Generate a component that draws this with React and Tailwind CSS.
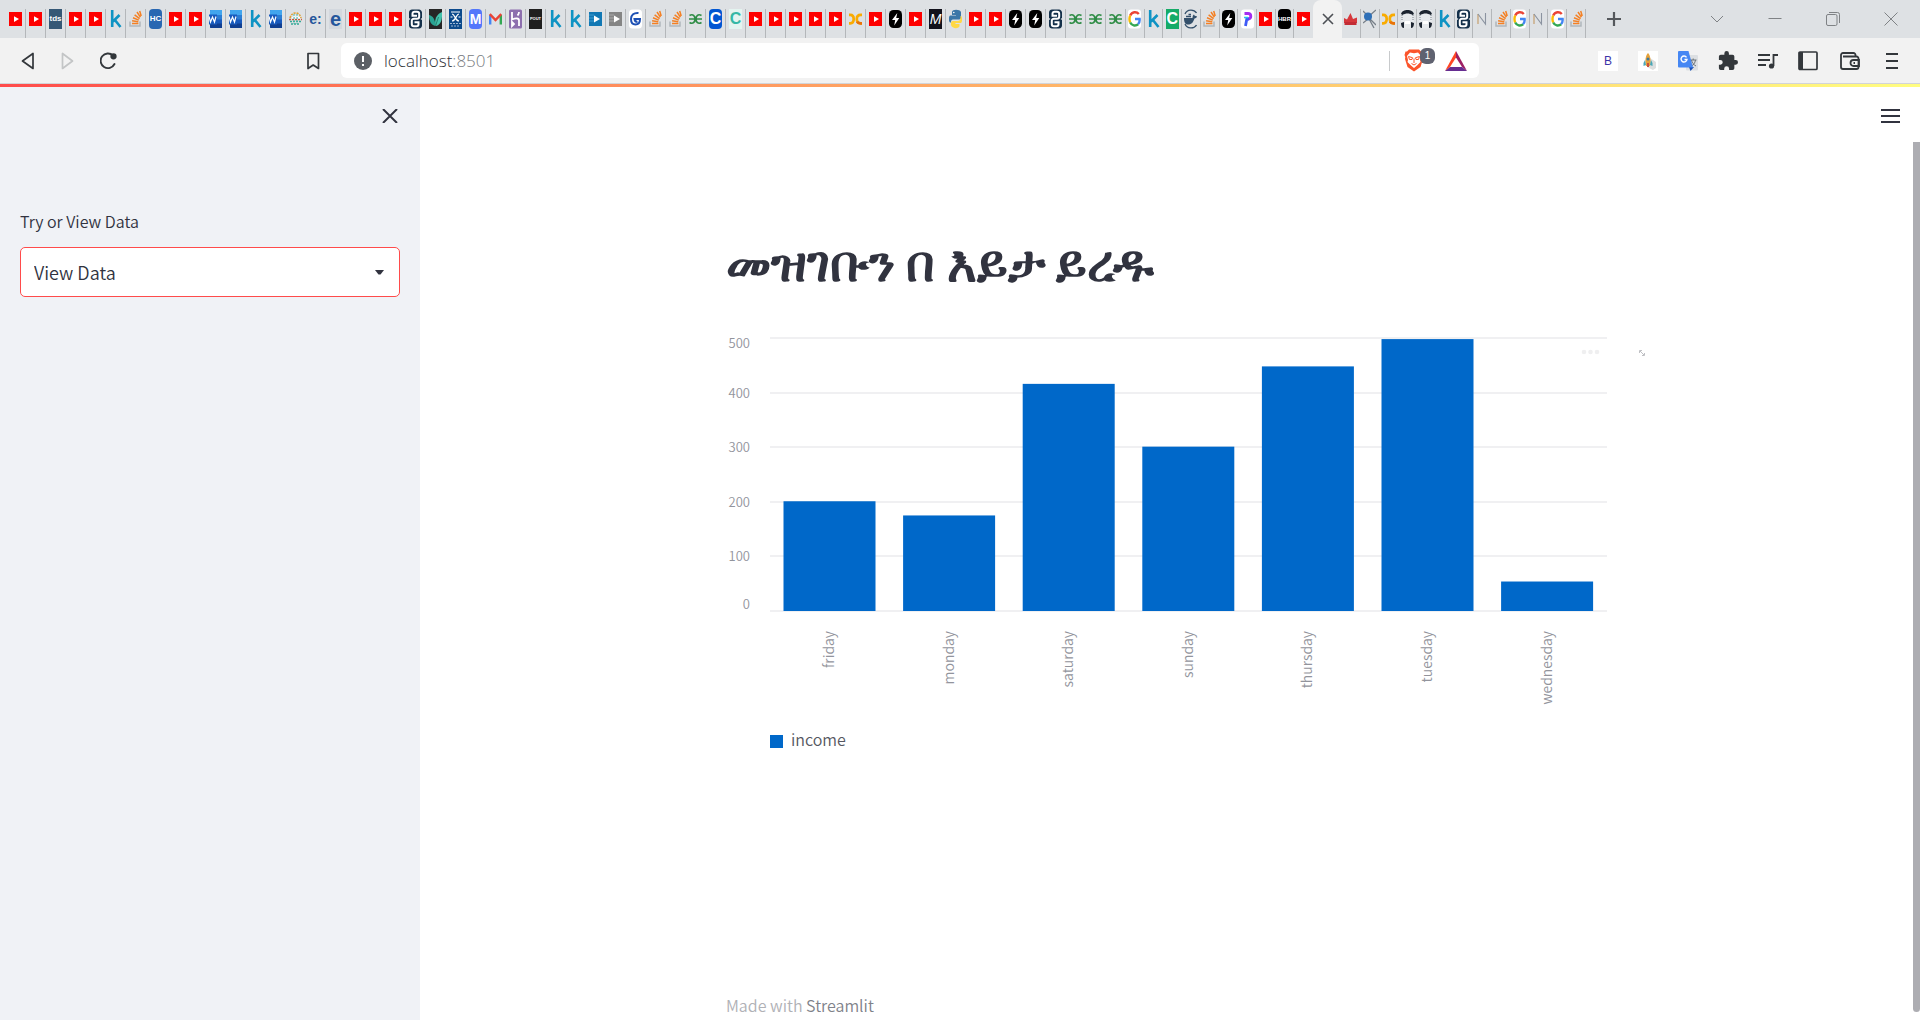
import React from "react";

const SO = () => (
  <svg viewBox="0 0 13 20" className="h-5 w-[13px]" fill="none">
    <path d="M1 12.500v4.500h10v-4.500" stroke="#b0b6bc" strokeWidth="1.500" />
    <path d="M3 14.600h6.400M3.100 11.800l6.200 1M4 8.800l5.800 2.300M5.600 5.800l5 3.800M8 3l3.400 5.200M10.700 2l1.500 5" stroke="#f48024" strokeWidth="1.500" />
  </svg>
);
const YT = () => (
  <svg viewBox="0 0 13 20" className="h-5 w-[13px]">
    <rect y="3" width="13" height="14" fill="#fe0000" />
    <path d="M5 7.200v5.800l5-2.900z" fill="#fff" />
  </svg>
);
const Word = () => (
  <svg viewBox="0 0 13 20" className="h-5 w-[13px]">
    <rect x="1" y="1" width="12" height="18" rx="1" fill="#185abd" />
    <path d="M1 2a1 1 0 0 1 1-1h11v5H1z" fill="#41a5ee" />
    <path d="M1 6h12v4.500H1z" fill="#2b7cd3" />
    <path d="M1 14.500h12V19H2a1 1 0 0 1-1-1z" fill="#103f91" />
    <rect y="5.500" width="8" height="10" fill="#185abd" />
    <path d="M0 7.500l1.500 5.500L3.500 8l2 5L7 7.500" stroke="#fff" strokeWidth="1.200" fill="none" />
  </svg>
);
const Kaggle = () => (
  <svg viewBox="0 0 13 20" className="h-5 w-[13px]" fill="none" stroke="#0e93c4" strokeWidth="2.600">
    <path d="M3.200 1v17M10.500 6L4 12.500M5.500 10.500l6 7.500" />
  </svg>
);
const Gfg = () => (
  <svg viewBox="0 0 13 20" className="h-5 w-[13px]" fill="none" stroke="#2f8d46" strokeWidth="1.700">
    <path d="M0 10h13M0.500 6.500C4 4.500 6 7 6 10s-2 5.500-5.500 3.500M12.500 6.500C9 4.500 7 7 7 10s2 5.500 5.500 3.500" />
  </svg>
);
const Scroll = () => (
  <svg viewBox="0 0 13 20" className="h-5 w-[13px]" fill="none">
    <path d="M3 .5h7c1.500 0 3 1.500 3 3v5.500l-1.500 1 1.500 1v5.500c0 1.500-1 3-3 3H3c-1.500 0-3-1-3-3V11l1.500-1L0 9V3.500c0-2 1.500-3 3-3z" fill="#14304a" />
    <path d="M2.500 6.800h5.500M3.500 6V4.800c0-1.300.8-2 2-2h2.500c1.500 0 2.200.7 2.200 2v2.700c0 1.500-.7 2.300-2.200 2.300H5c-1.500 0-2.200.8-2.200 2.200v3.200c0 1.300.7 2 2 2h2.700c1.300 0 2-.7 2-2v-1M10.500 13.200H5.500" stroke="#fff" strokeWidth="2" />
  </svg>
);
const Bolt = () => (
  <svg viewBox="0 0 13 20" className="h-5 w-[13px]">
    <rect y="1" width="13" height="18" rx="4.500" fill="#000" />
    <path d="M8.300 4L3 11h3.200l-1 5.500L10.300 9H7.200z" fill="#fff" />
  </svg>
);
const Colab = () => (
  <svg viewBox="0 0 13 20" className="h-5 w-[13px]" fill="none" strokeWidth="2.700">
    <path d="M0 5.800h1.200c2.200 0 3.500 1.500 3.500 4.200s-1.300 4.300-3.500 4.300H0" stroke="#f9ab00" />
    <path d="M13 5.800h-1.300c-2.500 0-3.900 1.700-3.900 4.200s1.400 4.300 3.900 4.300H13" stroke="#f9ab00" />
    <path d="M13 14.300h-1.500c-1.500 0-2.800-.6-3.500-1.700" stroke="#e8710a" />
  </svg>
);
const Google = () => (
  <svg viewBox="0 0 13 20" className="h-5 w-[13px]" fill="none" strokeWidth="2.400">
    <rect y="0.500" width="13" height="19" rx="3" fill="#fff" />
    <path d="M2.200 6.500C4 2.500 8.500 2.300 10.800 5" stroke="#ea4335" />
    <path d="M2.200 6.500c-.9 2.200-.9 4.800 0 7" stroke="#fbbc05" />
    <path d="M2.200 13.500c1.500 3 5.200 4 8 1.800" stroke="#34a853" />
    <path d="M7 10h4.600c.2 2-.3 4-1.600 5.200" stroke="#4285f4" />
  </svg>
);
const Letter = ({ children, className }) => (
  <span className={"flex h-5 w-[13px] items-center justify-center whitespace-nowrap font-['Liberation_Sans',sans-serif] leading-none " + className}>{children}</span>
);
const Hc = () => <Letter className="rounded bg-[#2867b2] text-[8px] font-bold text-white">HC</Letter>;
const Tds = () => <Letter className="bg-[#355876] text-[8px] font-bold text-white">tds</Letter>;
const Basket = () => (
  <svg viewBox="0 0 13 20" className="h-5 w-[13px]" fill="none" strokeWidth="1.600" strokeDasharray="2 1">
    <path d="M1 9c1-3.500 3-5 5.500-5s4.500 1.500 5.500 5" stroke="#e0a030" />
    <path d="M0 10.500h13" stroke="#c55a3a" />
    <path d="M1 12.500h11M2 15h9" stroke="#35a795" />
    <path d="M4.500 7h5M3 8.700h8" stroke="#fff" />
    <path d="M5 5v10M8 5v10" stroke="#48b7a8" strokeWidth="1" />
  </svg>
);
const Ecolon = () => <Letter className="text-[14px] font-bold text-[#24569c]">e:</Letter>;
const E = () => <Letter className="bg-[#d3d8de] text-[20px] font-bold text-[#24569c]">e</Letter>;
const Leaf = () => (
  <svg viewBox="0 0 13 20" className="h-5 w-[13px]">
    <rect width="13" height="20" fill="#262626" />
    <path d="M6.500 17C2 16 0 12 0 6c4 1 6 4 6.500 11z" fill="#2aa393" />
    <path d="M6.500 17C5 10 8 5 13 3c.5 7-1 13-6.500 14z" fill="#43c2ac" />
    <path d="M6.500 17L9.500 8" stroke="#26806f" />
  </svg>
);
const Emblem = () => (
  <svg viewBox="0 0 13 20" className="h-5 w-[13px]" fill="none" stroke="#fff">
    <rect width="13" height="20" fill="#0b4a8c" stroke="none" />
    <path d="M2 3h9M3 5c3 0 3 7 7 7M10 5c-3 0-3 7-7 7M1.500 8h2M9.500 8h2" strokeWidth="1.200" />
    <path d="M1 14.500h11M2 17h9" strokeWidth="1" strokeDasharray="2 1" stroke="#9db7d4" />
  </svg>
);
const MBlue = () => <Letter className="rounded bg-[#5377fb] text-[14px] font-bold text-white">M</Letter>;
const Gmail = () => (
  <svg viewBox="0 0 13 20" className="h-5 w-[13px]" fill="none" strokeWidth="2.400">
    <path d="M1.200 6v9.500" stroke="#4285f4" />
    <path d="M11.800 6v9.500" stroke="#34a853" />
    <path d="M0.800 5l5.700 6 5.700-6" stroke="#ea4335" />
  </svg>
);
const Heroku = () => (
  <svg viewBox="0 0 13 20" className="h-5 w-[13px]" fill="none" stroke="#fff" strokeWidth="1.800">
    <rect y="0.500" width="13" height="19" rx="1.500" fill="#8d6fae" stroke="none" />
    <path d="M3 3v7.500c4-1.500 7-1.500 7 1V17M3 13v4l2-2zM10 3c0 1.500-.5 2.500-1.500 3.500" />
  </svg>
);
const Pout = () => <Letter className="bg-[#1f1f1f] text-[4px] font-bold text-white">POUT</Letter>;
const PlayBlue = () => (
  <svg viewBox="0 0 13 20" className="h-5 w-[13px]">
    <rect y="3" width="13" height="14" fill="#1278b4" />
    <path d="M0 6h5M0 9h5M0 12h5" stroke="#3c9bce" />
    <path d="M5 6.500v7l6-3.500z" fill="#fff" />
  </svg>
);
const PlayGray = () => (
  <svg viewBox="0 0 13 20" className="h-5 w-[13px]">
    <rect y="3" width="13" height="14" fill="#858585" />
    <path d="M0 6h5M0 9h5M0 12h5" stroke="#a8a8a8" />
    <path d="M5 6.500v7l6-3.500z" fill="#fff" />
  </svg>
);
const GBlue = () => (
  <svg viewBox="0 0 13 20" className="h-5 w-[13px]" fill="none" stroke="#1d50b4" strokeWidth="2">
    <rect y="0.500" width="13" height="19" rx="3.500" fill="#fff" stroke="none" />
    <path d="M9.500 4C5 3.500 2 6 2 10c0 3.500 2 5.500 4.500 5.500S11 13.500 11 10H5.500c.3 2 1.500 3 3 3" />
  </svg>
);
const CBlue = () => <Letter className="rounded bg-[#0056d2] text-[16px] font-bold text-white">C</Letter>;
const CTeal = () => <Letter className="bg-[#e4f4f0] text-[16px] font-bold text-[#35b8a5]">C</Letter>;
const CGreen = () => <Letter className="bg-[#16ab68] text-[16px] font-bold text-white">C</Letter>;
const MBlack = () => <Letter className="bg-[#12121c] text-[14px] italic text-white">M</Letter>;
const Python = () => (
  <svg viewBox="0 0 13 20" className="h-5 w-[13px]">
    <path d="M3 3c0-3 8-3 9 0v5c0 2-1 2.500-3 2.500H4c-1.500 0-2 1-2 3H1c-1.500-1-1.500-6 0-7h6V6H3z" fill="#3b77a8" />
    <path d="M2 16c1 4 8 4 8.500 1v-2H6.500v-1H12c1.500-1 1.500-6 0-7h-.5v2c0 2-1 3-3 3H5c-2 0-3 .5-3 2z" fill="#ffd845" />
    <circle cx="4.800" cy="3.500" r=".8" fill="#fff" />
  </svg>
);
const Docker = () => (
  <svg viewBox="0 0 13 20" className="h-5 w-[13px]" fill="none" stroke="#34506b">
    <path d="M1 5C3 0 10 0 12.500 4M1 15c2 5 9 5 11.500 1" strokeWidth="1.300" />
    <path d="M0 9h8.500c0-2 .5-3 1.500-3.500.5 1 .8 1.500 3 1.800-.5 2-1.500 2-2.500 2.200C9 14 7 15.500 4 15.500S0 13 0 9z" fill="#34506b" stroke="none" />
    <path d="M2 7.500h5M4.500 5.500H7" strokeWidth="1.600" />
  </svg>
);
const Purple = () => (
  <svg viewBox="0 0 13 20" className="h-5 w-[13px]" fill="none" strokeWidth="2.800">
    <rect y="0.500" width="13" height="19" rx="3" fill="#fff" />
    <path d="M3.500 4.500h3.500c3.500 0 4 5 0 5.500" stroke="#a52df0" />
    <path d="M8 10H5.800L4.500 17" stroke="#3f5bf6" />
    <path d="M3 8.500h4" stroke="#28c5ee" strokeWidth="1.500" />
  </svg>
);
const Hbr = () => <Letter className="rounded bg-black text-[6px] font-bold text-white">HBR</Letter>;
const Crown = () => (
  <svg viewBox="0 0 13 20" className="h-5 w-[13px]">
    <path d="M0 9l3 1.500L6.500 4 9 10l4-1.500V14H0z" fill="#d6383c" />
    <path d="M0.500 13h12v3h-12z" fill="#c32c35" />
  </svg>
);
const Network = () => (
  <svg viewBox="0 0 13 20" className="h-5 w-[13px]" stroke="#777f88">
    <path d="M5 8l8-7M5 8l8 8M5 8l6 11M0 14l5-4M0 2l4 4" strokeWidth="1.300" />
    <circle cx="5" cy="7.500" r="4" fill="#2e6fb7" stroke="none" />
  </svg>
);
const Face = () => (
  <svg viewBox="0 0 13 20" className="h-5 w-[13px]">
    <rect y="0.500" width="13" height="19" rx="3" fill="#e6e9ec" />
    <path d="M0 5c1-5.500 12-5.500 13 0l-1.500 1c-3-2-7-2-10 0z" fill="#1c2430" />
    <path d="M1 6v6M12 6v6" stroke="#7b828b" strokeDasharray="1 1" />
    <path d="M0 14l3-1v6c-2 0-3-2-3-5zM10 13l3 1c0 3-1 5-3 5z" fill="#1c2430" />
    <path d="M4 13.500h5" stroke="#fff" strokeWidth="3" />
  </svg>
);
const Nn = () => (
  <svg viewBox="0 0 13 20" className="h-5 w-[13px]" fill="none" strokeWidth="1.100">
    <path d="M2 15V5" stroke="#c39a63" />
    <path d="M2 5l7.500 10V4" stroke="#8b93a0" />
  </svg>
);

const groupA = [YT, YT, Tds, YT, YT, Kaggle, SO, Hc, YT, YT, Word, Word, Kaggle, Word, Basket, Ecolon, E, YT, YT, YT, Scroll, Leaf, Emblem, MBlue, Gmail, Heroku, Pout, Kaggle, Kaggle, PlayBlue, PlayGray, GBlue, SO, SO, Gfg, CBlue, CTeal, YT, YT, YT, YT, YT, Colab, YT, Bolt, YT, MBlack, Python, YT, YT, Bolt, Bolt, Scroll, Gfg, Gfg, Gfg];
const groupB = [Google, Kaggle, CGreen, Docker, SO, Bolt, Purple, YT, Hbr, YT];
const groupC = [Crown, Network, Colab, Face, Face, Kaggle, Scroll, Nn, SO, Google, Nn, Google, SO];

function TabGroup({ tabs, className, lastRule = true }) {
  return (
    <div className={"flex pt-[9px] " + className}>
      {tabs.map((Icon, i) => (
        <button
          key={i}
          aria-label={"Tab " + (i + 1)}
          className={
            "flex min-w-0 flex-1 items-start justify-center border-r " +
            (i === tabs.length - 1 && !lastRule ? "border-transparent" : "border-[#b4b7ba]")
          }
        >
          <Icon />
        </button>
      ))}
    </div>
  );
}

function TabStrip() {
  return (
    <div className="flex h-[38px] bg-[#dee1e4] pl-[6px]">
      <TabGroup tabs={groupA} className="w-[1120px]" />
      <TabGroup tabs={groupB} className="w-[187px]" lastRule={false} />
      <button aria-label="Close tab" className="flex w-[29px] items-center justify-center rounded-t-lg bg-[#f2f2f2]">
        <svg viewBox="0 0 12 12" className="h-3 w-3" stroke="#4d5055" strokeWidth="1.600">
          <path d="M1 1l10 10M11 1L1 11" />
        </svg>
      </button>
      <TabGroup tabs={groupC} className="w-[244px]" />
      <div className="flex flex-1 items-center justify-between pl-5 pr-[22px]">
        <button aria-label="New tab">
          <svg viewBox="0 0 16 16" className="h-4 w-4" stroke="#55585c" strokeWidth="2.200">
            <path d="M8 1v14M1 8h14" />
          </svg>
        </button>
        <div className="flex items-center gap-11">
          <button aria-label="Search tabs">
            <svg viewBox="0 0 14 14" className="h-3.5 w-3.5" fill="none" stroke="#7f8285">
              <path d="M1 4l6 6 6-6" />
            </svg>
          </button>
          <button aria-label="Minimize">
            <svg viewBox="0 0 14 14" className="h-3.5 w-3.5" stroke="#7f8285">
              <path d="M0.500 6.500h13" />
            </svg>
          </button>
          <button aria-label="Restore">
            <svg viewBox="0 0 14 14" className="h-3.5 w-3.5" fill="none" stroke="#7f8285">
              <rect x="0.500" y="2.500" width="10.500" height="11" rx="1.500" />
              <path d="M3 .5h8.500a2 2 0 0 1 2 2v8.500" />
            </svg>
          </button>
          <button aria-label="Close window">
            <svg viewBox="0 0 14 14" className="h-3.5 w-3.5" stroke="#7f8285">
              <path d="M.5 .5l13 13M13.500 .5l-13 13" />
            </svg>
          </button>
        </div>
      </div>
    </div>
  );
}

function Toolbar() {
  return (
    <div className="flex h-[46px] items-center border-b border-[#d2d4d8] bg-[#f2f2f2]">
      <div className="flex w-[341px] items-center justify-between px-5">
        <div className="flex items-center gap-[22px]">
          <button aria-label="Back">
            <svg viewBox="0 0 18 18" className="h-[18px] w-[18px]" fill="none" stroke="#33373b" strokeWidth="1.700" strokeLinejoin="round">
              <path d="M13 1.500v15L2.500 9z" />
            </svg>
          </button>
          <button aria-label="Forward">
            <svg viewBox="0 0 18 18" className="h-[18px] w-[18px]" fill="none" stroke="#c3c5c6" strokeWidth="1.700" strokeLinejoin="round">
              <path d="M2.500 1.500v15L12.500 9z" />
            </svg>
          </button>
          <button aria-label="Reload">
            <svg viewBox="1 0 18 18" className="h-[18px] w-[18px]" fill="none" stroke="#33373b" strokeWidth="1.900" strokeLinecap="round">
              <path d="M14 3.500A7.300 7.300 0 1 0 15.500 12" />
              <circle cx="14.500" cy="4.300" r="2.200" fill="#33373b" />
            </svg>
          </button>
        </div>
        <button aria-label="Bookmark">
          <svg viewBox="0 0 16 18" className="h-[18px] w-4" fill="none" stroke="#33373b" strokeWidth="1.700" strokeLinejoin="round">
            <path d="M3 1.500h10.500v15L8.200 13 3 16.500z" />
          </svg>
        </button>
      </div>
      <div className="flex h-[35px] min-w-0 flex-1 items-center rounded-md bg-white pl-[13px] pr-3">
        <svg viewBox="0 0 18 18" className="h-[18px] w-[18px]">
          <circle cx="9" cy="9" r="9" fill="#5c6066" />
          <path d="M9 4v6M9 12v2" stroke="#fff" strokeWidth="2" />
        </svg>
        <a href="#" className="ml-3 flex-1 font-['Open_Sans','Noto_Sans',sans-serif] text-[17px] leading-6 text-[#303338]">
          localhost<span className="text-[#777b80]">:8501</span>
        </a>
        <span className="h-[20px] w-px bg-[#c8cacc]" />
        <button aria-label="Brave Shields, 1 blocked" className="ml-3.5 flex">
          <svg viewBox="0 0 20 23" className="h-[23px] w-5">
            <path d="M5 0.500h10l2 2h1.500l1 3.500-.8 2 .3 2-2.500 8L10 22.500 3.500 18 1 10l.3-2L.5 6l1-3.500H3z" fill="#fb542b" />
            <path d="M6 3.500l4 .8 4-.8 3 3.500-1 4 .5 2-3.500 3.500-3 2.500-3-2.500L3.500 13l.5-2-1-4z" fill="#fff" />
            <path d="M4.500 7.500l4 1.200L8 10.500H5.500zM15.500 7.500l-4 1.200.5 1.800h2.500zM10 9.500V14M7.500 14.500L10 16l2.500-1.500" stroke="#fb542b" fill="none" strokeWidth="1" />
          </svg>
          <span className="-ml-1 -mt-px flex h-4 w-[15px] items-center justify-center rounded-md bg-[#5f6270] font-['Liberation_Sans',sans-serif] text-[10px] leading-none text-white">1</span>
        </button>
        <button aria-label="Rewards" className="ml-[10px]">
          <svg viewBox="0 0 22 20" className="h-5 w-[22px]">
            <path d="M11 0L0 20l5-4 6-9.500z" fill="#ff4724" />
            <path d="M11 0l11 20-5-4-6-9.500z" fill="#9e1f63" />
            <path d="M0 20h22l-5-4H5z" fill="#662d91" />
          </svg>
        </button>
      </div>
      <div className="flex w-[441px] items-center justify-end gap-5 pr-[18px]">
        <button aria-label="Bootstrap extension" className="flex h-5 w-5 items-center justify-center bg-white font-['Liberation_Sans',sans-serif] text-xs text-[#3d35a8]">B</button>
        <button aria-label="Rocket extension" className="flex h-5 w-5 items-center justify-center bg-white">
          <svg viewBox="0 0 20 20" className="h-5 w-5">
            <path d="M12 7l6 4v6l-3 2-6-3z" fill="#dedede" />
            <path d="M10 2c3 3 3 9 2 13H8C7 11 7 5 10 2z" fill="#e6a23c" />
            <path d="M7 9l-1.500 3v3L8 14zM13 9l1.500 3v3L12 14z" fill="#48a7b8" />
            <circle cx="10" cy="8" r="1.500" fill="#3b78a0" />
            <path d="M9 12h2v4H9z" fill="#c9503c" />
          </svg>
        </button>
        <button aria-label="Translate">
          <svg viewBox="0 0 20 20" className="h-5 w-5">
            <rect x="8" y="4" width="12" height="15.500" rx="1" fill="#dcdfe2" />
            <path d="M11 16l5 0-3.500 4z" fill="#1a4fb5" />
            <path d="M12 9h6.500M15.200 7.500V9M17.500 9c-.5 3-2 5-4 6M13.500 9c.5 3 2 4.500 4.500 6" stroke="#6b7278" fill="none" />
            <path d="M1 0h9.500L15 16.500H1a1 1 0 0 1-1-1V1a1 1 0 0 1 1-1z" fill="#4687f3" />
            <path d="M8.500 6.300A3 3 0 1 0 9 8.500H6.500" stroke="#fff" strokeWidth="1.400" fill="none" />
          </svg>
        </button>
        <button aria-label="Extensions">
          <svg viewBox="1 1 22 22" className="h-5 w-5" fill="#33373b">
            <path d="M20.500 11H19V7a2 2 0 0 0-2-2h-4V3.500a2.500 2.500 0 0 0-5 0V5H4a2 2 0 0 0-2 2v3.800h1.500a2.700 2.700 0 0 1 0 5.400H2V20a2 2 0 0 0 2 2h3.800v-1.500a2.700 2.700 0 0 1 5.400 0V22H17a2 2 0 0 0 2-2v-4h1.500a2.500 2.500 0 0 0 0-5z" />
          </svg>
        </button>
        <button aria-label="Media">
          <svg viewBox="0 0 20 18" className="h-[18px] w-5" fill="none" stroke="#33373b" strokeWidth="1.800">
            <path d="M0 3h12M0 8h12M0 13h8M15.500 14V3H20" />
            <circle cx="13.500" cy="14" r="2.600" fill="#33373b" stroke="none" />
          </svg>
        </button>
        <button aria-label="Sidebar">
          <svg viewBox="0 0 20 20" className="h-5 w-5" fill="none" stroke="#33373b" strokeWidth="1.700">
            <rect x="1" y="1" width="18" height="17.500" rx="1" />
            <path d="M3 1v17.500" strokeWidth="4" />
          </svg>
        </button>
        <button aria-label="Wallet" className="ml-0.5">
          <svg viewBox="0 0 20 18" className="h-[18px] w-5" fill="none" stroke="#33373b" strokeWidth="1.800">
            <path d="M15.500 4.500V3a2 2 0 0 0-2-2H3a2 2 0 0 0-2 2v12a2 2 0 0 0 2 2h13.500a2 2 0 0 0 2-2V6.500a2 2 0 0 0-2-2H3" />
            <path d="M19 8h-5.500a3 3 0 0 0 0 6H19z" />
            <path d="M13.500 11h1.500" />
          </svg>
        </button>
        <button aria-label="Menu" className="ml-0.5">
          <svg viewBox="0 0 20 18" className="h-[18px] w-5" stroke="#33373b" strokeWidth="1.800">
            <path d="M4 2h12M4 9h12M4 16h12" />
          </svg>
        </button>
      </div>
    </div>
  );
}

function Sidebar() {
  return (
    <aside className="w-[420px] shrink-0 bg-[#f0f2f6] px-5">
      <div className="flex justify-end pt-[22px]">
        <button aria-label="Close sidebar">
          <svg viewBox="0 0 20 14" className="h-3.5 w-5" stroke="#31333f" strokeWidth="2">
            <path d="M3 0l14 14M17 0L3 14" />
          </svg>
        </button>
      </div>
      <label htmlFor="mode" className="mt-[86px] block text-[16px] leading-6 text-[#31333f]">Try or View Data</label>
      <div className="mt-[14px] grid items-center">
        <select id="mode" defaultValue="View Data" className="col-start-1 row-start-1 h-[50px] w-full appearance-none rounded-[5px] border border-[#ff4b4b] bg-white px-[13px] text-[18px] text-[#31333f]">
          <option>View Data</option>
          <option>Try</option>
        </select>
        <svg viewBox="0 0 9 5" className="pointer-events-none col-start-1 row-start-1 mr-4 h-[5px] w-[9px] justify-self-end" fill="#31333f">
          <path d="M0 0h9L5.500 4.500h-2z" />
        </svg>
      </div>
    </aside>
  );
}

const data = [
  ["friday", 201],
  ["monday", 175],
  ["saturday", 416],
  ["sunday", 301],
  ["thursday", 448],
  ["tuesday", 498],
  ["wednesday", 54],
];
const ticks = [
  [500, 11],
  [400, 61],
  [300, 115],
  [200, 170],
  [100, 224],
  [0, 272],
];
const LEFT = 44;
const BAND = 119.6;
const BASE = 274;

function Chart() {
  return (
    <svg viewBox="0 0 881 420" className="block w-full overflow-visible" role="img" aria-label="Bar chart of income by day">
      {ticks.map(([t]) => (
        <rect key={t} x={LEFT} y={Math.round(BASE - 1 - (t / 500) * 273)} width="837" height="2" fill="#f0f0f2" />
      ))}
      {data.map(([d, v], i) => {
        const x = LEFT + i * BAND;
        const h = (v / 500) * 273;
        return (
          <g key={d}>
            <rect x={x + 13.500} y={BASE - h} width="92" height={h} fill="#0068c9" />
            <text transform={`translate(${x + 64} 294) rotate(-90)`} textAnchor="end" fontSize="14" fill="#92949c">{d}</text>
          </g>
        );
      })}
      {ticks.map(([t, y]) => (
        <text key={t} x="24" y={y} textAnchor="end" fontSize="13" fill="#92949c">{t}</text>
      ))}
      <rect x={LEFT} y="398" width="13" height="13" fill="#0068c9" />
      <text x="65" y="409" fontSize="16" fill="#555761">income</text>
      <g fill="#efeff0">
        <circle cx="858" cy="15" r="2.300" />
        <circle cx="864.500" cy="15" r="2.300" />
        <circle cx="871" cy="15" r="2.300" />
      </g>
      <path d="M914 14l4 4M913.500 16v-2.500h2.500M918.500 16v2.500H916" stroke="#bfc0c4" fill="none" />
    </svg>
  );
}

export default function App() {
  return (
    <div className="flex min-h-screen flex-col bg-white font-['Noto_Sans_CJK_SC','Noto_Sans',sans-serif] font-[350]">
      <header>
        <TabStrip />
        <Toolbar />
        <div className="h-[3px] bg-linear-to-r from-[#ff4b4b] to-[#fffd80]" />
      </header>
      <div className="flex flex-1">
        <Sidebar />
        <main className="flex min-w-0 flex-1 flex-col">
          <div className="flex justify-end pr-3 pt-[22px]">
            <button aria-label="Main menu">
              <svg viewBox="0 0 20 14" className="h-3.5 w-5" stroke="#31333f" strokeWidth="1.800">
                <path d="M0 1h19M0 7h19M0 13h19" />
              </svg>
            </button>
          </div>
          <div className="mx-auto flex w-full max-w-[881px] flex-1 flex-col">
            <h1 className="mt-[103px] whitespace-nowrap text-[50px] font-bold leading-[66px] text-[#31333f]">መዝገቡን በ እይታ ይረዱ</h1>
            <div className="mt-[45px]">
              <Chart />
            </div>
            <footer className="mt-auto pb-[3px] text-[16px] leading-6 text-[#b0b1b6]">
              Made with <a href="#" className="text-[#80828a]">Streamlit</a>
            </footer>
          </div>
        </main>
        <div className="flex w-[7px] flex-col pb-2 pt-[55px]">
          <div className="flex-1 rounded-b-full bg-[#adadb2]" />
        </div>
      </div>
    </div>
  );
}
